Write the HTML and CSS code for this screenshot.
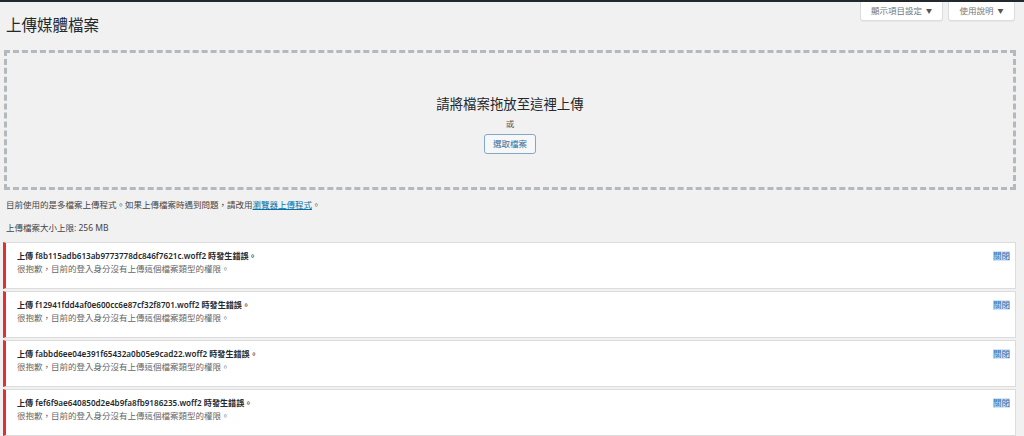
FILE: index.html
```html
<!DOCTYPE html>
<html lang="zh-Hant">
<head>
<meta charset="utf-8">
<title>上傳媒體檔案</title>
<link rel="stylesheet" href="styles.css">
</head>
<body>
<div class="topbar"></div>
<div class="wrap">
  <div class="header">
    <h1 class="title">上傳媒體檔案</h1>
    <div class="meta-links">
      <button class="meta-btn">顯示項目設定 <span class="caret">▼</span></button>
      <button class="meta-btn">使用說明 <span class="caret">▼</span></button>
    </div>
  </div>

  <div class="dropzone">
    <p class="drop-title">請將檔案拖放至這裡上傳</p>
    <p class="drop-or">或</p>
    <button class="select-btn">選取檔案</button>
  </div>

  <p class="info">目前使用的是多檔案上傳程式。如果上傳檔案時遇到問題，請改用<a href="#" class="link">瀏覽器上傳程式</a>。</p>
  <p class="info limit">上傳檔案大小上限: 256 MB</p>

  <div class="items">
    <div class="item">
      <div class="item-text">
        <div class="item-head">上傳 f8b115adb613ab9773778dc846f7621c.woff2 時發生錯誤。</div>
        <div class="item-msg">很抱歉，目前的登入身分沒有上傳這個檔案類型的權限。</div>
      </div>
      <a href="#" class="dismiss">關閉</a>
    </div>
    <div class="item">
      <div class="item-text">
        <div class="item-head">上傳 f12941fdd4af0e600cc6e87cf32f8701.woff2 時發生錯誤。</div>
        <div class="item-msg">很抱歉，目前的登入身分沒有上傳這個檔案類型的權限。</div>
      </div>
      <a href="#" class="dismiss">關閉</a>
    </div>
    <div class="item">
      <div class="item-text">
        <div class="item-head">上傳 fabbd6ee04e391f65432a0b05e9cad22.woff2 時發生錯誤。</div>
        <div class="item-msg">很抱歉，目前的登入身分沒有上傳這個檔案類型的權限。</div>
      </div>
      <a href="#" class="dismiss">關閉</a>
    </div>
    <div class="item">
      <div class="item-text">
        <div class="item-head">上傳 fef6f9ae640850d2e4b9fa8fb9186235.woff2 時發生錯誤。</div>
        <div class="item-msg">很抱歉，目前的登入身分沒有上傳這個檔案類型的權限。</div>
      </div>
      <a href="#" class="dismiss">關閉</a>
    </div>
  </div>
</div>
</body>
</html>
```

FILE: styles.css
```css
* { box-sizing: border-box; }
html, body {
  margin: 0;
  padding: 0;
  background: #f1f1f1;
  font-family: "Noto Sans", "Noto Sans CJK TC", sans-serif;
  color: #444;
  overflow: hidden;
}
.topbar {
  height: 2px;
  background: #23282d;
}
.wrap {
  padding: 0 8px 0 4px;
}
.header {
  display: flex;
  justify-content: space-between;
  align-items: flex-start;
  height: 48px;
}
.title {
  margin: 13px 0 0 2px;
  font-size: 15.5px;
  line-height: 20px;
  font-weight: 400;
  color: #23282d;
}
.meta-links {
  display: flex;
  gap: 5px;
  margin-right: 1px;
}
.meta-btn {
  height: 19px;
  padding: 0;
  background: #fff;
  border: 1px solid #ddd;
  border-top: none;
  border-radius: 0 0 3px 3px;
  font-family: inherit;
  font-size: 8.5px;
  line-height: 17px;
  color: #72777c;
  white-space: nowrap;
  text-align: center;
  box-shadow: 0 1px 1px rgba(0,0,0,0.04);
}
.meta-btn:first-child { width: 83px; }
.meta-btn:last-child { width: 67px; }
.caret {
  font-size: 6px;
  margin-left: 2px;
  color: #555;
  vertical-align: 1px;
}
.dropzone {
  height: 140px;
  border: 3px dashed #b4b9be;
  display: flex;
  flex-direction: column;
  align-items: center;
  padding-top: 42px;
}
.drop-title {
  margin: 0;
  font-size: 13.4px;
  line-height: 18px;
  color: #23282d;
}
.drop-or {
  margin: 5px 0 0;
  font-size: 8.5px;
  line-height: 12px;
  color: #555;
}
.select-btn {
  margin-top: 4px;
  height: 20px;
  width: 52px;
  padding: 0;
  background: #f7f7f7;
  border: 1px solid #7fa9cc;
  border-radius: 3px;
  font-family: inherit;
  font-size: 8.5px;
  line-height: 18px;
  color: #2f6fa3;
}
.info {
  margin: 8px 0 0 2px;
  font-size: 8.5px;
  line-height: 14px;
  color: #444;
}
.info.limit {
  margin-top: 9px;
}
.link {
  color: #0073aa;
  text-decoration: underline;
}
.items {
  margin-top: 7px;
  margin-left: -1px;
  display: flex;
  flex-direction: column;
  gap: 2px;
}
.item {
  height: 47px;
  background: #fff;
  border: 1px solid #dcdcdc;
  border-left: 3px solid #dc3232;
  display: flex;
  justify-content: space-between;
  align-items: flex-start;
  padding: 6px 5px 0 11px;
}
.item-head {
  font-size: 8.1px;
  line-height: 13px;
  font-weight: 600;
  color: #23282d;
}
.item-msg {
  font-size: 8.5px;
  line-height: 13px;
  color: #666;
}
.dismiss {
  margin-top: 2px;
  font-size: 8.5px;
  line-height: 10px;
  color: #2a6fb0;
  background: #d5e5f4;
  text-decoration: none;
}
```
